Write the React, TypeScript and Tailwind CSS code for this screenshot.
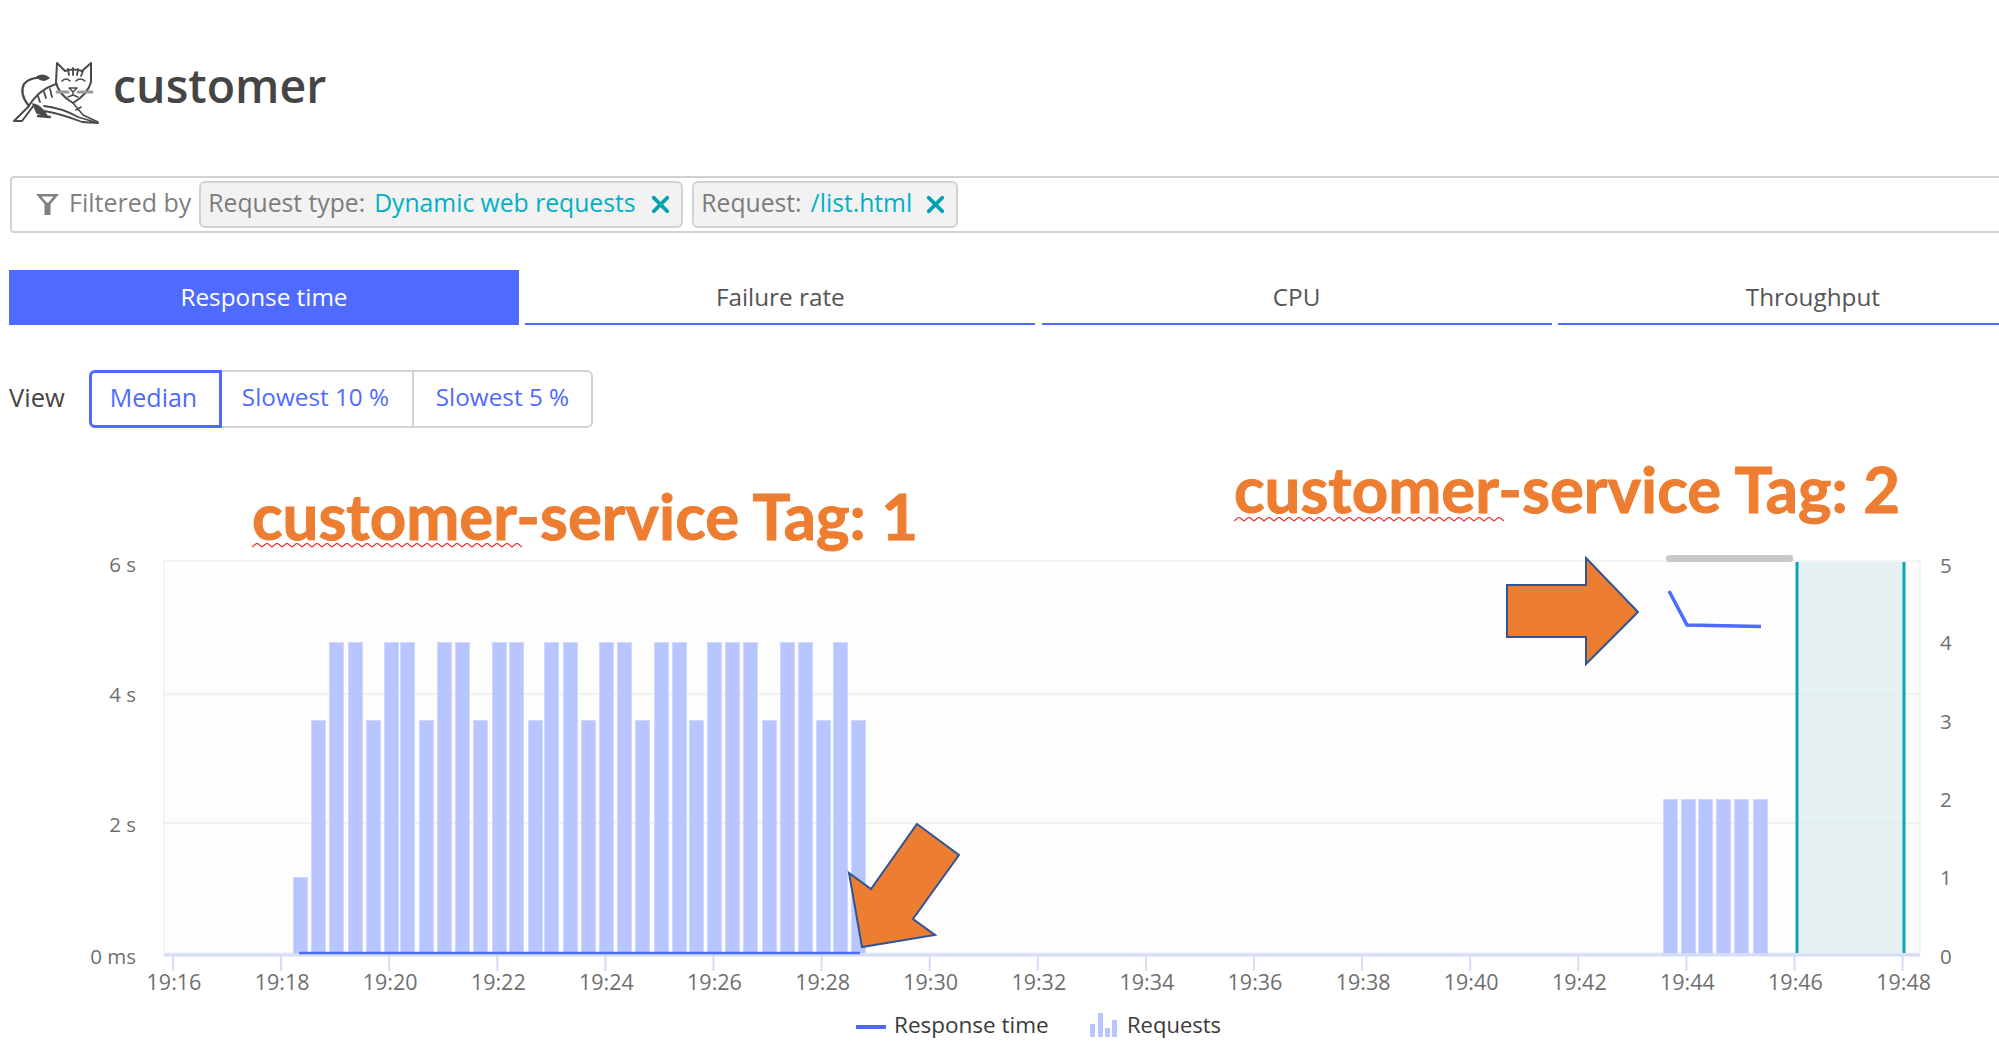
import React from 'react';
import { X } from 'lucide-react';

const UI_FONT = { fontFamily: '"Open Sans", sans-serif' };

// x position + level for each request bar, read off the chart
const BAR_TOPS: Record<string, number> = { low: 877, mid: 720, high: 642, tag2: 799 };
const BARS: [number, string][] = [
  [293, 'low'], [311, 'mid'], [329, 'high'], [348, 'high'], [366, 'mid'], [384, 'high'], [400, 'high'],
  [419, 'mid'], [437, 'high'], [455, 'high'], [473, 'mid'], [492, 'high'], [509, 'high'], [528, 'mid'],
  [544, 'high'], [563, 'high'], [581, 'mid'], [599, 'high'], [617, 'high'], [635, 'mid'], [654, 'high'],
  [672, 'high'], [689, 'mid'], [707, 'high'], [725, 'high'], [743, 'high'], [762, 'mid'], [780, 'high'],
  [798, 'high'], [816, 'mid'], [833, 'high'], [851, 'mid'],
  [1663, 'tag2'], [1681, 'tag2'], [1698, 'tag2'], [1716, 'tag2'], [1734, 'tag2'], [1753, 'tag2'],
];

const TIME_LABELS = ['19:16', '19:18', '19:20', '19:22', '19:24', '19:26', '19:28', '19:30', '19:32', '19:34', '19:36', '19:38', '19:40', '19:42', '19:44', '19:46', '19:48'];
const LEFT_TICKS: [string, number][] = [['6 s', 572], ['4 s', 702], ['2 s', 832], ['0 ms', 964]];
const RIGHT_TICKS: [string, number][] = [['5', 573], ['4', 650], ['3', 729], ['2', 807], ['1', 885], ['0', 964]];

const zigzag = (width: number) => {
  let d = 'M0 4';
  for (let x = 5, i = 0; x <= width; x += 5, i++) d += ` L${x} ${i % 2 ? 4 : 0}`;
  return d;
};

const TomcatLogo = () => (
  <svg width="104" height="75" viewBox="8 55 104 75" fill="none" stroke="#4a4a4a" strokeWidth="1.6" strokeLinejoin="round" strokeLinecap="round">
    {/* tail */}
    <path d="M48 78 Q30 76 24 84 Q19 94 29 106" strokeWidth="2.2" />
    <path d="M37 77 Q43 73 49 78 Q43 83 37 77 Z" fill="#4a4a4a" />
    {/* back and rear leg */}
    <path d="M56 84 Q38 90 28 107 L14 121 L22 121 L34 105" strokeWidth="2" />
    <path d="M44 92 L46 98 M50 89 L52 97 M38 96 L40 102" strokeWidth="1.8" />
    <path d="M33 104 Q42 106 47 116 L37 113 Z" fill="#4a4a4a" />
    <path d="M38 116 L50 117" strokeWidth="2.4" />
    {/* belly and front leg */}
    <path d="M44 106 Q62 108 78 117 L98 123 L82 122 Q62 114 44 111" strokeWidth="1.8" />
    <path d="M73 103 L83 115 L98 122 M76 110 L81 107" strokeWidth="1.6" />
    {/* head */}
    <path d="M57 63 L65 71 Q73 68 82 71 L91 63 L91 82 Q88 94 73 103 Q58 94 56 82 Z" strokeWidth="2" fill="#fff" />
    <path d="M68 69 L69 75 M73 68 L73 75 M78 69 L77 75 M83 71 L81 76" strokeWidth="1.8" />
    <path d="M62 81 Q66 77 70 81 M76 81 Q80 77 85 81" />
    <path d="M69 88 L77 88 L73 92 Z M73 92 L73 95 M68 97 L73 95 L78 97" strokeWidth="1.5" />
    <path d="M57 92 L68 92 M78 92 L92 92" stroke="#9a9a9a" strokeWidth="3" />
  </svg>
);

const FunnelIcon = () => (
  <svg width="23" height="21" viewBox="0 0 23 21" className="mr-[10px]">
    <path d="M0 0 H23 L14.5 10 V21 H8.5 V10 Z M5.5 2.6 L10.5 8.4 H12.5 L17.5 2.6 Z" fill="#808080" fillRule="evenodd" />
  </svg>
);

const FilterChip = ({ label, value, width }: { label: string; value: string; width: string }) => (
  <div className={`flex h-[47px] items-center rounded-[6px] border-2 border-[#d2d2d2] bg-[#f2f2f2] pb-[3px] pl-[7px] text-[24.7px] ${width}`}>
    <span className="text-[#7c7c7c]">{label}</span>
    <span className="ml-[9px] text-[#00b1c6]">{value}</span>
    <X className="ml-auto mr-[7px] mt-[3px] text-[#00a1b2]" size={27} strokeWidth={3.4} />
  </div>
);

const RequestsChart = () => (
  <svg width="1999" height="594" viewBox="0 470 1999 594" className="block">
    <rect x="164" y="561" width="1756" height="392" fill="#fdfdfd" stroke="#f2f3f5" strokeWidth="2" />
    <path d="M164 694 H1920 M164 823 H1920" stroke="#f0f1f3" strokeWidth="2" />

    {/* selected timeframe */}
    <rect x="1797" y="562" width="106" height="391" fill="#dcecee" opacity="0.75" />
    <path d="M1797 562 V953 M1904 562 V953" stroke="#0ba5b5" strokeWidth="3" />

    {BARS.map(([x, level]) => (
      <rect key={x} x={x + 0.5} y={BAR_TOPS[level] + 0.5} width="14" height={953 - BAR_TOPS[level]} fill="#b8c5ff" stroke="#cfd8fe" strokeWidth="1" />
    ))}

    {/* axis */}
    <path d="M164 955 H1920" stroke="#d5dcf5" strokeWidth="3" />
    {TIME_LABELS.map((label, i) => {
      const x = 173 + i * 108.1;
      return (
        <g key={label}>
          <path d={`M${x} 956 V971`} stroke="#d5dcf5" strokeWidth="2" />
          <text x={x + 1} y="990" textAnchor="middle" fontSize="21.5" fill="#6f6f6f" style={UI_FONT}>{label}</text>
        </g>
      );
    })}
    {LEFT_TICKS.map(([label, y]) => (
      <text key={label} x="136" y={y} textAnchor="end" fontSize="20.5" fill="#6f6f6f" style={UI_FONT}>{label}</text>
    ))}
    {RIGHT_TICKS.map(([label, y]) => (
      <text key={label} x="1940" y={y} fontSize="20.5" fill="#6f6f6f" style={UI_FONT}>{label}</text>
    ))}

    {/* response time series */}
    <path d="M299 953 H860" stroke="#4f6bff" strokeWidth="2.5" fill="none" />
    <path d="M1669 591 L1687 625 L1761 626.5" stroke="#4f6bff" strokeWidth="3.5" fill="none" />
    <rect x="1666" y="555" width="127" height="7" rx="3" fill="#c9c9c9" />

    {/* annotation arrows */}
    <path d="M1507 585 H1586 V558 L1638 612 L1586 664 V637 H1507 Z" fill="#ed7d31" stroke="#2f5597" strokeWidth="2" />
    <path d="M917 824 L959 855 L913 919 L935 935 L862 947 L849 873 L871 889 Z" fill="#ed7d31" stroke="#2f5597" strokeWidth="2" />

    {/* legend */}
    <path d="M856 1027 H886" stroke="#4f6bff" strokeWidth="4" />
    <text x="894" y="1033" fontSize="22.5" fill="#3a3a3a" style={UI_FONT}>Response time</text>
    <path d="M1090 1024 h5 v13 h-5 Z M1098 1013 h5 v24 h-5 Z M1105 1028 h5 v9 h-5 Z M1112 1020 h5 v17 h-5 Z" fill="#b8c5ff" />
    <text x="1127" y="1033" fontSize="22" fill="#3a3a3a" style={UI_FONT}>Requests</text>
  </svg>
);

const Annotation = ({ text, className, squiggleClass }: { text: string; className: string; squiggleClass: string }) => (
  <>
    <span
      className={`absolute whitespace-nowrap text-[63.5px] font-bold leading-none text-[#ed7d31] [-webkit-text-stroke:1px_#ed7d31] ${className}`}
      style={{ fontFamily: 'Lato, sans-serif' }}
    >
      {text}
    </span>
    <svg width="270" height="6" className={`absolute ${squiggleClass}`}>
      <path d={zigzag(270)} fill="none" stroke="#f03030" strokeWidth="1.2" />
    </svg>
  </>
);

export default function App() {
  return (
    <div className="relative h-[1064px] w-[1999px] overflow-hidden bg-white" style={UI_FONT}>
      <header className="flex h-[176px] items-start pl-[8px] pt-[55px]">
        <TomcatLogo />
        <h1 className="ml-[1px] mt-[-5px] text-[46.5px] font-semibold leading-[70px] text-[#454545]">customer</h1>
      </header>

      <div className="ml-[10px] flex h-[57px] w-[2100px] items-center rounded-[4px] border-2 border-[#d2d2d2] pl-[24px]">
        <FunnelIcon />
        <span className="mt-[-4px] text-[25px] text-[#808080]">Filtered by</span>
        <div className="ml-[8px] flex gap-[9px]">
          <FilterChip label="Request type:" value="Dynamic web requests" width="w-[484px]" />
          <FilterChip label="Request:" value="/list.html" width="w-[266px]" />
        </div>
      </div>

      <nav className="ml-[9px] mt-[37px] flex gap-[6.3px]">
        {['Response time', 'Failure rate', 'CPU', 'Throughput'].map((tab, i) => (
          <div
            key={tab}
            className={`flex h-[55px] w-[510px] shrink-0 items-center justify-center border-b-2 border-[#4f6bff] pt-[2px] text-[24.3px] ${i === 0 ? 'bg-[#4f6bff] text-white' : 'text-[#555555]'}`}
          >
            {tab}
          </div>
        ))}
      </nav>

      <div className="ml-[9px] mt-[45px] flex items-center">
        <span className="mt-[-3px] w-[80px] text-[25.5px] text-[#454545]">View</span>
        <div className="flex h-[58px] w-[504px] rounded-[6px] border-2 border-[#d2d2d2] pb-[3px] text-[24.3px] text-[#4f6bff]">
          <div className="-mx-[2px] -mt-[2px] -mb-[5px] flex w-[133px] items-center justify-center rounded-l-[6px] border-[3px] border-[#4f6bff] pb-[3px] pr-[4px] text-[25px]">Median</div>
          <div className="-mb-[3px] ml-[2px] flex w-[192px] items-center justify-center border-r-2 border-[#d2d2d2] pb-[3px] pr-[3px]">Slowest 10 %</div>
          <div className="flex flex-1 items-center justify-center">Slowest 5 %</div>
        </div>
      </div>

      <section className="relative mt-[42px]">
        <RequestsChart />
        <Annotation text="customer-service Tag: 1" className="left-[252px] top-[14px]" squiggleClass="left-[252px] top-[73px]" />
        <Annotation text="customer-service Tag: 2" className="left-[1234px] top-[-13px]" squiggleClass="left-[1234px] top-[47px]" />
      </section>
    </div>
  );
}
